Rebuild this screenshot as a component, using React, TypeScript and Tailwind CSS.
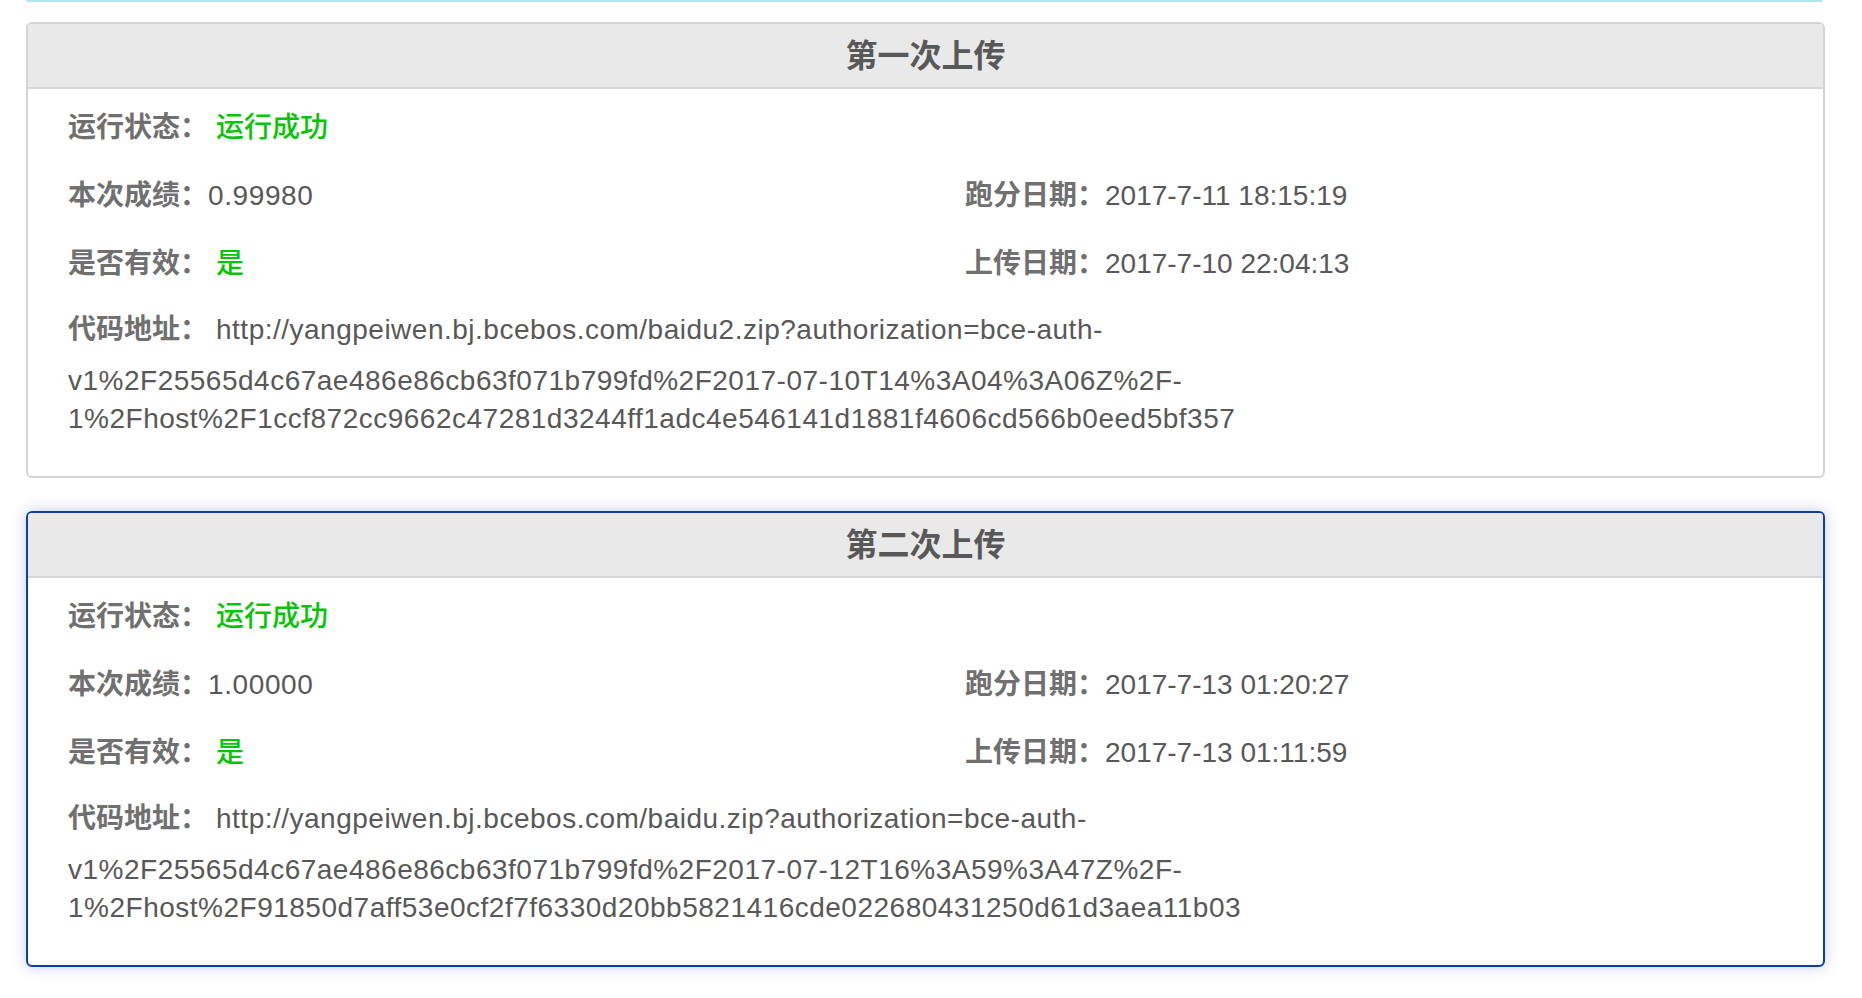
const FONT = { fontFamily: '"Liberation Sans", "Noto Sans CJK SC", sans-serif' };

type Upload = {
  title: string;
  score: string;
  runDate: string;
  uploadDate: string;
  urlHead: string;
  urlLines: string[];
  active?: boolean;
};

const uploads: Upload[] = [
  {
    title: '第一次上传',
    score: '0.99980',
    runDate: '2017-7-11 18:15:19',
    uploadDate: '2017-7-10 22:04:13',
    urlHead: 'http://yangpeiwen.bj.bcebos.com/baidu2.zip?authorization=bce-auth-',
    urlLines: [
      'v1%2F25565d4c67ae486e86cb63f071b799fd%2F2017-07-10T14%3A04%3A06Z%2F-',
      '1%2Fhost%2F1ccf872cc9662c47281d3244ff1adc4e546141d1881f4606cd566b0eed5bf357',
    ],
  },
  {
    title: '第二次上传',
    score: '1.00000',
    runDate: '2017-7-13 01:20:27',
    uploadDate: '2017-7-13 01:11:59',
    urlHead: 'http://yangpeiwen.bj.bcebos.com/baidu.zip?authorization=bce-auth-',
    urlLines: [
      'v1%2F25565d4c67ae486e86cb63f071b799fd%2F2017-07-12T16%3A59%3A47Z%2F-',
      '1%2Fhost%2F91850d7aff53e0cf2f7f6330d20bb5821416cde022680431250d61d3aea11b03',
    ],
    active: true,
  },
];

function Field({ label, value, green, spaced, wide }: { label: string; value: string; green?: boolean; spaced?: boolean; wide?: boolean }) {
  return (
    <div className="flex items-center h-[68px] text-[28px]">
      <span className="w-[140px] shrink-0 font-bold text-[#707070]">{label}</span>
      <span
        className={`${spaced ? 'ml-[8px]' : ''} ${wide ? 'tracking-[0.6px]' : ''} ${
          green ? 'text-[#05c505] font-medium' : 'text-[#585858]'
        }`}
      >
        {value}
      </span>
    </div>
  );
}

function UploadCard({ u }: { u: Upload }) {
  return (
    <div
      className={`w-[1799px] rounded-[6px] border-2 overflow-hidden bg-white ${
        u.active ? 'border-[#0d3f9e] shadow-[0_0_14px_rgba(60,80,210,0.3)]' : 'border-[#d4d4d4]'
      }`}
    >
      <div className="h-[65px] bg-[#e9e9e9] border-b-2 border-[#d6d6d6] flex items-center justify-center">
        <span className="text-[32px] font-bold text-[#585858]">{u.title}</span>
      </div>
      <div className="pl-[40px] pt-[5px] pb-[38px]">
        <Field label="运行状态：" value="运行成功" green spaced />
        <div className="grid grid-cols-[897px_1fr]">
          <Field label="本次成绩：" value={u.score} wide />
          <Field label="跑分日期：" value={u.runDate} />
          <Field label="是否有效：" value="是" green spaced />
          <Field label="上传日期：" value={u.uploadDate} />
        </div>
        <div className="flex items-center h-[64px] text-[28px]">
          <span className="w-[140px] shrink-0 font-bold text-[#707070]">代码地址：</span>
          <span className="ml-[8px] tracking-[0.5px] text-[#585858] whitespace-nowrap">{u.urlHead}</span>
        </div>
        {u.urlLines.map((l) => (
          <div key={l} className="text-[28px] leading-[38px] tracking-[0.5px] text-[#585858] whitespace-nowrap">
            {l}
          </div>
        ))}
      </div>
    </div>
  );
}

export default function App() {
  return (
    <div className="w-[1862px] h-[998px] bg-white overflow-hidden" style={FONT}>
      <div className="ml-[26px] w-[1797px] h-[2px] bg-[#b0e4ee] rounded-b-[3px]" />
      <div className="ml-[26px] mt-[20px] flex flex-col gap-[33px]">
        {uploads.map((u) => (
          <UploadCard key={u.title} u={u} />
        ))}
      </div>
    </div>
  );
}
